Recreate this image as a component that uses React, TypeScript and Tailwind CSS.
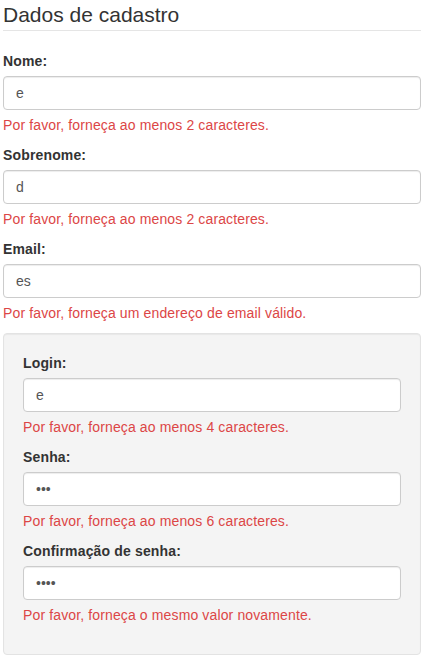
const font = { fontFamily: '"Liberation Sans", Arial, sans-serif' };

type Field = { label: string; value: string; error: string; type?: string };

const personal: Field[] = [
  { label: 'Nome:', value: 'e', error: 'Por favor, forneça ao menos 2 caracteres.' },
  { label: 'Sobrenome:', value: 'd', error: 'Por favor, forneça ao menos 2 caracteres.' },
  { label: 'Email:', value: 'es', error: 'Por favor, forneça um endereço de email válido.' },
];

const access: Field[] = [
  { label: 'Login:', value: 'e', error: 'Por favor, forneça ao menos 4 caracteres.' },
  { label: 'Senha:', value: 'abc', error: 'Por favor, forneça ao menos 6 caracteres.', type: 'password' },
  { label: 'Confirmação de senha:', value: 'abcd', error: 'Por favor, forneça o mesmo valor novamente.', type: 'password' },
];

const FormField = ({ f }: { f: Field }) => (
  <div>
    <label className="block h-5 mb-[5px] text-[14px] leading-5 font-bold tracking-[0.15px] text-[#333]">{f.label}</label>
    <input
      type={f.type || 'text'}
      defaultValue={f.value}
      className="block w-full h-[34px] px-3 py-1.5 text-[14px] text-[#555] bg-white border border-[#ccc] rounded-[4px] shadow-[inset_0_1px_1px_rgba(0,0,0,0.075)] outline-none"
      style={font}
    />
    <p className="mt-[5px] mb-2.5 h-5 text-[14px] leading-5 tracking-[0.13px] text-[#dc4646]">{f.error}</p>
  </div>
);

export default function App() {
  return (
    <div className="bg-white min-h-[661px]" style={font}>
      <div className="ml-[3px] w-[418px]">
        <h4 className="h-[31px] border-b border-[#e5e5e5] text-[21px] leading-[30px] text-[#333] mb-5">
          Dados de cadastro
        </h4>
        {personal.map((f) => (
          <FormField key={f.label} f={f} />
        ))}
        <div className="mt-[2px] bg-[#f4f4f4] border border-[#e3e3e3] rounded-[4px] p-[19px] shadow-[inset_0_1px_1px_rgba(0,0,0,0.05)]">
          {access.map((f) => (
            <FormField key={f.label} f={f} />
          ))}
        </div>
      </div>
    </div>
  );
}
